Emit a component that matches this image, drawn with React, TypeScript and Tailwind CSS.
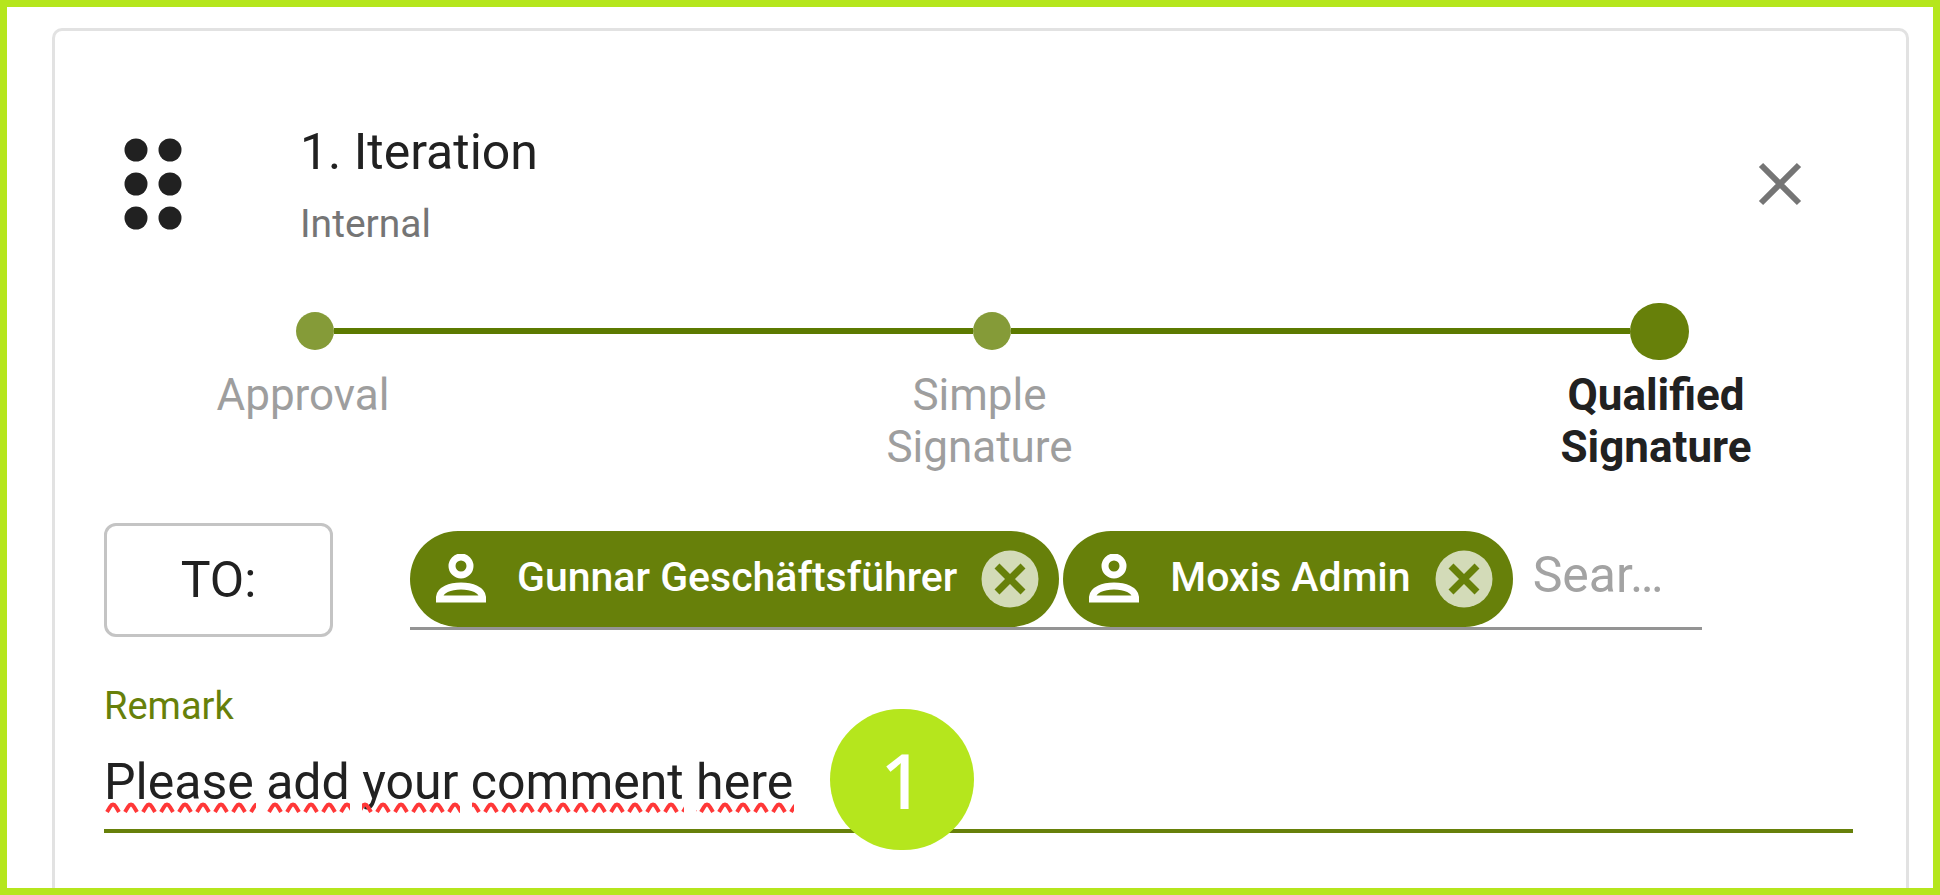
import { useState } from "react";

const STEPS = ["Approval", "Simple Signature", "Qualified Signature"];

// start and width of each marked word in the remark field
const MISSPELLED = [
  { x: 0, width: 152 },
  { x: 162, width: 84 },
  { x: 258, width: 98 },
  { x: 368, width: 212 },
  { x: 592, width: 98 },
];

function DragHandle() {
  return (
    <svg viewBox="0 0 58 92" className="h-[92px] w-[58px]" fill="#212121" aria-hidden>
      {[12, 46, 80].map((cy) => (
        <g key={cy}>
          <circle cx="12" cy={cy} r="11.5" />
          <circle cx="46" cy={cy} r="11.5" />
        </g>
      ))}
    </svg>
  );
}

function PersonIcon() {
  return (
    <svg viewBox="0 0 50 50" className="h-[50px] w-[50px] shrink-0" fill="none" stroke="#fff" strokeWidth="7" aria-hidden>
      <circle cx="25" cy="12" r="9" />
      <path d="M3.500 45V43C4 36 14 32 25 32S46 36 46.500 43V45Z" />
    </svg>
  );
}

function Chip({ name, onRemove }: { name: string; onRemove: () => void }) {
  return (
    <div className="flex h-24 shrink-0 items-center rounded-full bg-[#67800a] pl-[26px] pr-[20px]">
      <PersonIcon />
      <span className="ml-[31px] whitespace-nowrap pb-1 text-[41px] font-medium leading-[52px] text-white">{name}</span>
      <button type="button" onClick={onRemove} aria-label={`Remove ${name}`} className="ml-[24px] shrink-0">
        <svg viewBox="0 0 58 58" className="h-[58px] w-[58px]" aria-hidden>
          <circle cx="29" cy="29" r="28.5" fill="#d3dbb8" />
          <path d="M16 16L42 42M42 16L16 42" stroke="#67800a" strokeWidth="7" />
        </svg>
      </button>
    </div>
  );
}

function Squiggles() {
  return (
    <svg className="pointer-events-none absolute left-0 top-[51px] h-3 w-[704px]" aria-hidden>
      <defs>
        <pattern id="squiggle" width="18" height="12" patternUnits="userSpaceOnUse">
          <path d="M3 11L6 6Q9 1 12 6L15 11" fill="none" stroke="#ff3838" strokeWidth="4" />
        </pattern>
      </defs>
      {MISSPELLED.map(({ x, width }) => (
        <rect key={x} x={x} y="0" width={width} height="12" fill="url(#squiggle)" />
      ))}
    </svg>
  );
}

export default function App() {
  const [step, setStep] = useState(2);
  const [people, setPeople] = useState(["Gunnar Geschäftsführer", "Moxis Admin"]);
  const [remark, setRemark] = useState("Please add your comment here");

  const dot = (i: number) => (
    <span
      className={
        i === step
          ? "h-[57px] w-[59px] shrink-0 rounded-full bg-[#67800a]"
          : "h-[38px] w-[38px] shrink-0 rounded-full bg-[#859b38]"
      }
    />
  );

  return (
    <div className="bg-[#b5e61d]">
      <main className="flex h-screen flex-col overflow-hidden rounded-md border-[7px] border-[#b5e61d] bg-white pl-[45px] pr-6 pt-[21px] font-['Roboto',sans-serif] text-[#212121]">
        <section className="flex-1 rounded-t-[10px] border-[3px] border-b-0 border-[#e2e2e2] pt-[89px]">
          <header className="flex items-center pl-[69px] pr-24">
            <DragHandle />
            <div className="ml-[118px] flex-1">
              <h1 className="text-[50px] leading-[64px]">1. Iteration</h1>
              <p className="mt-4 text-[39px] leading-[48px] text-[#757575]">Internal</p>
            </div>
            <button type="button" aria-label="Remove iteration">
              <svg viewBox="0 0 60 60" className="h-[60px] w-[60px]" fill="none" stroke="#757575" strokeWidth="6" aria-hidden>
                <path d="M11 11L49 49M49 11L11 49" />
              </svg>
            </button>
          </header>

          <div className="relative mt-[53px] flex h-[60px] items-center pl-[241px] pr-[217px]">
            {dot(0)}
            <span className="h-[6px] flex-[639] bg-[#5c7a00]" />
            {dot(1)}
            <span className="h-[6px] flex-[619] bg-[#5c7a00]" />
            {dot(2)}
            <input
              type="range"
              min={0}
              max={2}
              value={step}
              onChange={(e) => setStep(Number(e.target.value))}
              aria-label="Signature type"
              className="absolute inset-0 w-full cursor-pointer opacity-0"
            />
          </div>
          <div className="mt-[8px] flex items-start justify-between pl-[148px] pr-[150px] text-center text-[44px] leading-[52px]">
            {STEPS.map((label, i) => (
              <span key={label} className={i === step ? "w-[200px] font-bold" : "w-[200px] text-[#9e9e9e]"}>
                {label}
              </span>
            ))}
          </div>

          <div className="mt-[50px] flex items-center pl-[49px] pr-[204px]">
            <button
              type="button"
              className="h-[114px] w-[229px] shrink-0 rounded-xl border-[3px] border-[#c4c4c4] text-[50px] leading-[64px]"
            >
              TO:
            </button>
            <div className="ml-[77px] flex min-w-0 flex-1 items-center gap-1 border-b-[3px] border-[#949494]">
              {people.map((name) => (
                <Chip key={name} name={name} onRemove={() => setPeople(people.filter((p) => p !== name))} />
              ))}
              <input
                type="text"
                placeholder="Sear…"
                aria-label="Search people"
                className="ml-4 min-w-0 flex-1 pb-2 text-[50px] leading-[64px] outline-none placeholder:text-[#a3a3a3]"
              />
            </div>
          </div>

          <div className="mt-[45px] pl-[49px] pr-[53px]">
            <label htmlFor="remark" className="block text-[38px] leading-[48px] text-[#67800a]">
              Remark
            </label>
            <div className="relative mt-5 border-b-4 border-[#67800a] pb-[15px]">
              <input
                id="remark"
                type="text"
                value={remark}
                onChange={(e) => setRemark(e.target.value)}
                spellCheck={false}
                className="block h-16 w-full text-[50px] leading-[64px] outline-none"
              />
              <Squiggles />
              <span className="absolute -top-[41px] left-[726px] flex h-[141px] w-[144px] items-center justify-center rounded-full bg-[#b5e61d] font-['Noto_Sans',sans-serif] text-[76px] font-medium text-white">
                1
              </span>
            </div>
          </div>
        </section>
      </main>
    </div>
  );
}
